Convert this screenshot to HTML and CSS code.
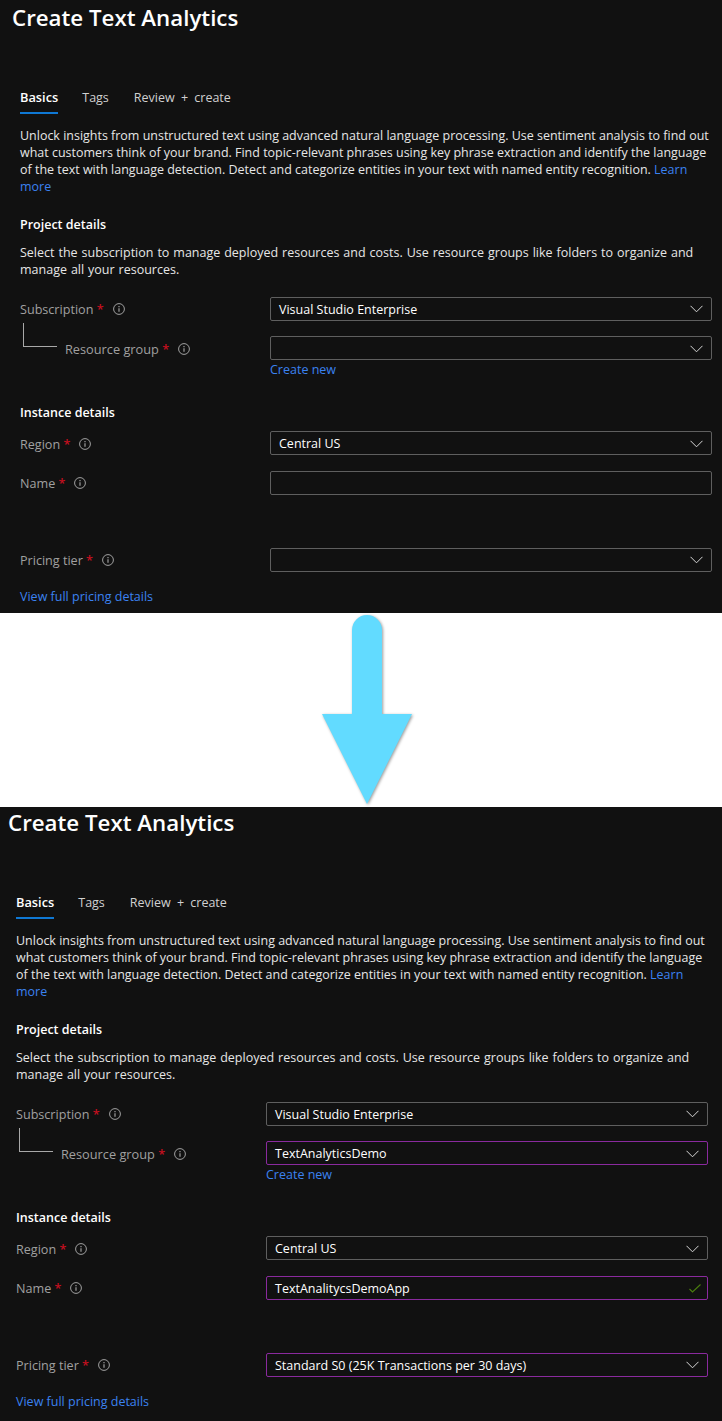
FILE: index.html
```html
<!DOCTYPE html>
<html lang="en">
<head>
<meta charset="utf-8">
<title>Create Text Analytics</title>
<link rel="stylesheet" href="styles.css">
</head>
<body>
<svg class="defs" width="0" height="0" aria-hidden="true">
  <symbol id="info" viewBox="0 0 12 12">
    <circle cx="6" cy="6" r="5.4" fill="none" stroke="currentColor" stroke-width="1"/>
    <path d="M6 5.2v3.6" stroke="currentColor" stroke-width="1.2" fill="none"/>
    <path d="M6 3v1.2" stroke="currentColor" stroke-width="1.2" fill="none"/>
  </symbol>
  <symbol id="chev" viewBox="0 0 13 8">
    <path d="M.5 .8 6.5 6.8 12.5 .8" fill="none" stroke="currentColor" stroke-width="1"/>
  </symbol>
  <symbol id="check" viewBox="0 0 12 9">
    <path d="M.5 5 3.5 8 11.5 .5" fill="none" stroke="currentColor" stroke-width="1.1"/>
  </symbol>
</svg>

<section class="panel">
  <h1 class="title">Create Text Analytics</h1>
  <nav class="tabs">
    <a class="tab tab-active">Basics</a>
    <a class="tab">Tags</a>
    <a class="tab tab-review">Review + create</a>
  </nav>
  <p class="intro">Unlock insights from unstructured text using advanced natural language processing. Use sentiment analysis to find out what customers think of your brand. Find topic-relevant phrases using key phrase extraction and identify the language of the text with language detection. Detect and categorize entities in your text with named entity recognition. <a class="link">Learn more</a></p>
  <h2 class="heading heading-project">Project details</h2>
  <p class="desc">Select the subscription to manage deployed resources and costs. Use resource groups like folders to organize and manage all your resources.</p>

  <div class="row row-sub">
    <div class="label">Subscription <span class="req">*</span><svg class="info"><use href="#info"/></svg></div>
    <div class="box"><span class="value">Visual Studio Enterprise</span><svg class="chev"><use href="#chev"/></svg></div>
  </div>
  <div class="row row-rg">
    <div class="label label-child">Resource group <span class="req">*</span><svg class="info"><use href="#info"/></svg></div>
    <div class="box"><span class="value"></span><svg class="chev"><use href="#chev"/></svg></div>
  </div>
  <div class="row row-create"><a class="link create">Create new</a></div>

  <h2 class="heading heading-instance">Instance details</h2>
  <div class="row row-region">
    <div class="label">Region <span class="req">*</span><svg class="info"><use href="#info"/></svg></div>
    <div class="box"><span class="value">Central US</span><svg class="chev"><use href="#chev"/></svg></div>
  </div>
  <div class="row row-name">
    <div class="label">Name <span class="req">*</span><svg class="info"><use href="#info"/></svg></div>
    <div class="box"><span class="value"></span></div>
  </div>
  <div class="row row-price">
    <div class="label">Pricing tier <span class="req">*</span><svg class="info"><use href="#info"/></svg></div>
    <div class="box"><span class="value"></span><svg class="chev"><use href="#chev"/></svg></div>
  </div>
  <a class="link pricing">View full pricing details</a>
</section>

<div class="arrow-band">
  <svg class="arrow" viewBox="0 0 722 194" width="722" height="194" aria-hidden="true">
    <path class="arrow-shape" d="M352 101V17a15 15 0 0 1 30 0V101H412L367 191 322 101Z"/>
  </svg>
</div>

<section class="panel panel-after">
  <h1 class="title">Create Text Analytics</h1>
  <nav class="tabs">
    <a class="tab tab-active">Basics</a>
    <a class="tab">Tags</a>
    <a class="tab tab-review">Review + create</a>
  </nav>
  <p class="intro">Unlock insights from unstructured text using advanced natural language processing. Use sentiment analysis to find out what customers think of your brand. Find topic-relevant phrases using key phrase extraction and identify the language of the text with language detection. Detect and categorize entities in your text with named entity recognition. <a class="link">Learn more</a></p>
  <h2 class="heading heading-project">Project details</h2>
  <p class="desc">Select the subscription to manage deployed resources and costs. Use resource groups like folders to organize and manage all your resources.</p>

  <div class="row row-sub">
    <div class="label">Subscription <span class="req">*</span><svg class="info"><use href="#info"/></svg></div>
    <div class="box"><span class="value">Visual Studio Enterprise</span><svg class="chev"><use href="#chev"/></svg></div>
  </div>
  <div class="row row-rg">
    <div class="label label-child">Resource group <span class="req">*</span><svg class="info"><use href="#info"/></svg></div>
    <div class="box box-edited"><span class="value">TextAnalyticsDemo</span><svg class="chev"><use href="#chev"/></svg></div>
  </div>
  <div class="row row-create"><a class="link create">Create new</a></div>

  <h2 class="heading heading-instance">Instance details</h2>
  <div class="row row-region">
    <div class="label">Region <span class="req">*</span><svg class="info"><use href="#info"/></svg></div>
    <div class="box"><span class="value">Central US</span><svg class="chev"><use href="#chev"/></svg></div>
  </div>
  <div class="row row-name">
    <div class="label">Name <span class="req">*</span><svg class="info"><use href="#info"/></svg></div>
    <div class="box box-edited"><span class="value">TextAnalitycsDemoApp</span><svg class="check"><use href="#check"/></svg></div>
  </div>
  <div class="row row-price">
    <div class="label">Pricing tier <span class="req">*</span><svg class="info"><use href="#info"/></svg></div>
    <div class="box box-edited"><span class="value">Standard S0 (25K Transactions per 30 days)</span><svg class="chev"><use href="#chev"/></svg></div>
  </div>
  <a class="link pricing">View full pricing details</a>
</section>
</body>
</html>
```
FILE: styles.css
```css
* { box-sizing: border-box; }
html, body { margin: 0; padding: 0; }
body {
  width: 722px;
  background: #111111;
  color: #ffffff;
  font-family: "Open Sans", "Liberation Sans", sans-serif;
  font-size: 12.5px;
  line-height: 17px;
}
.defs { position: absolute; }

.panel {
  height: 613px;
  padding: 3px 10px 0 20px;
  background: #111111;
  overflow: hidden;
}
.panel-after {
  height: 614px;
  padding: 1px 14px 0 16px;
}

.title {
  margin: 0 0 0 -8px;
  font-size: 22.3px;
  line-height: 30px;
  font-weight: 600;
}

.tabs {
  display: flex;
  gap: 24px;
  margin-top: 50px;
  height: 31px;
}
.tab {
  color: #d0d0d0;
  height: 31px;
  padding-top: 6px;
  word-spacing: 3px;
}
.tab-active {
  color: #ffffff;
  font-weight: 600;
  font-size: 12.8px;
  border-bottom: 2px solid #0f78d4;
}
.tab-review { margin-left: 1px; }

.intro { margin: 13px 0 0; color: #e6e6e6; font-size: 12.47px; }
.desc { margin: 11px 0 0; color: #e6e6e6; word-spacing: 0.7px; }
.link { color: #3b82f0; }

.heading {
  margin: 0;
  font-size: 12.5px;
  line-height: 17px;
  font-weight: 600;
  color: #ffffff;
}
.heading-project { margin-top: 21px; }
.heading-instance { margin-top: 26px; }

.row {
  display: grid;
  grid-template-columns: 250px 1fr;
  align-items: center;
}
.row-sub { margin-top: 19px; }
.row-rg { margin-top: 15px; position: relative; }
.row-create { margin-top: 1px; }
.row-region { margin-top: 10px; }
.row-name { margin-top: 16px; }
.row-price { margin-top: 53px; }

.label {
  color: #a0a0a0;
  display: flex;
  align-items: center;
  white-space: pre;
  font-size: 12.6px;
}
.label-child { padding-left: 45px; font-size: 12.75px; }
.label-child::before {
  content: "";
  position: absolute;
  left: 3px;
  top: -13px;
  width: 33px;
  height: 23px;
  border-left: 1px solid #a8a8a8;
  border-bottom: 1px solid #a8a8a8;
}
.row-rg .label, .row-region .label { padding-top: 2px; }
.row-rg .box, .row-region .box { padding-top: 1px; }
.req { color: #c50f1f; font-weight: 600; }
.info {
  width: 12px;
  height: 12px;
  margin-left: 9px;
  color: #a0a0a0;
  flex: none;
}

.box {
  display: flex;
  align-items: center;
  justify-content: space-between;
  height: 24px;
  padding: 0 8px;
  border: 1px solid #5f5f5f;
  border-radius: 2px;
}
.box-edited { border-color: #8a2a9e; }
.value { color: #ffffff; }
.chev { width: 13px; height: 8px; color: #d6d6d6; flex: none; }
.check { width: 12px; height: 9px; color: #4a7f0e; flex: none; margin-right: -2px; }

.create { grid-column: 2; }
.pricing { display: block; margin-top: 16px; }

.arrow-band { background: #ffffff; height: 194px; }
.arrow { display: block; }
.arrow-shape {
  fill: #62dbff;
  filter: drop-shadow(1.5px 1.5px 1.5px rgba(0, 0, 0, 0.4));
}
```
